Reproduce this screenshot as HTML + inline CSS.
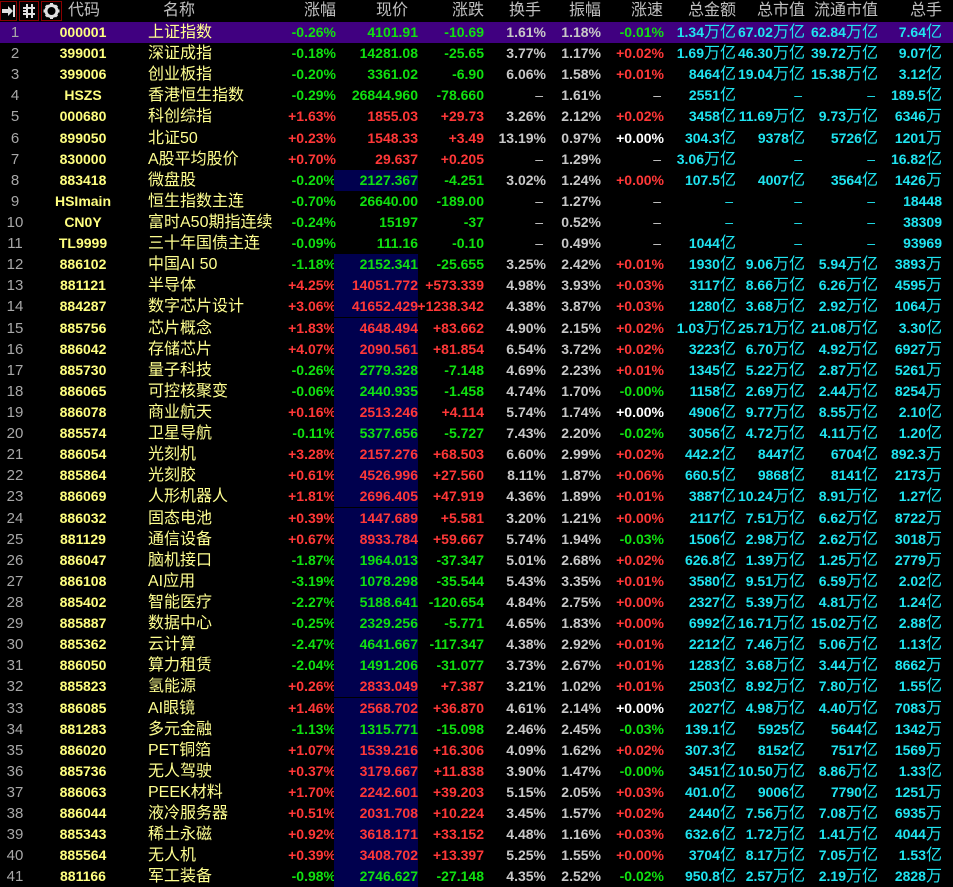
<!DOCTYPE html>
<html><head><meta charset="utf-8">
<style>
*{margin:0;padding:0;box-sizing:border-box}
body{width:953px;height:886px;background:#000;overflow:hidden;position:relative;font-family:"Liberation Sans","Noto Sans CJK SC",sans-serif}
.hd{position:absolute;top:0;left:0;width:953px;height:22px;color:#c0c0c0;font-size:16px;font-family:"Liberation Sans","Noto Sans CJK SC",sans-serif}
.hd span{position:absolute;top:0;line-height:22px;white-space:nowrap}
.ic{position:absolute;top:1px;height:20px;border:1px solid #8a0000}
#rows{position:absolute;top:22px;left:0;width:953px}
.r{position:relative;height:21.12px;width:953px}
.r.sel{background:#400080}
.r span{position:absolute;top:0;line-height:21px;white-space:nowrap;font-weight:bold;font-size:14px}
.r span:nth-child(1){left:0;width:30px;text-align:center;color:#a8a8a8;font-weight:normal;font-size:15px}
.r span:nth-child(2){left:40px;width:86px;text-align:center;color:#ffff80}
.r span:nth-child(3){left:148px;color:#ffff90;font-weight:normal;font-size:16px}
.r span:nth-child(4){right:617px}
.r span:nth-child(5){right:535px;width:84px;text-align:right;height:21px}
.r.b span:nth-child(5){background:#00004e}
.r span:nth-child(6){right:469px}
.r span:nth-child(7){right:407px;color:#c8c8c8}
.r span:nth-child(8){right:352px;color:#c8c8c8}
.r span:nth-child(9){right:289px}
.r span:nth-child(10){right:217px;color:#20e4f0}
.r span:nth-child(11){right:148px;color:#20e4f0}
.r span:nth-child(12){right:75px;color:#20e4f0}
.r span:nth-child(13){right:11px;color:#20e4f0}
i{font-style:normal;font-weight:normal;font-size:16px}
.g{color:#10e010!important}.d{color:#ff3838!important}.w{color:#fff!important}.s{color:#c8c8c8!important;font-weight:normal!important;padding-right:3px}
.sc{color:#20e4f0!important;font-weight:normal!important;padding-right:3px}
</style></head><body>
<div class="hd">
<div class="ic" style="left:0;width:17px"><svg width="15" height="18" viewBox="0 0 15 18"><path d="M1 7h6V4l5 5-5 5v-3H1z" fill="#e0e0e0"/><rect x="12" y="3" width="2" height="12" fill="#e0e0e0"/></svg></div>
<div class="ic" style="left:19px;width:20px"><svg width="18" height="18" viewBox="0 0 18 18"><g fill="#e0e0e0"><rect x="6" y="2" width="2" height="14"/><rect x="11" y="2" width="2" height="14"/><rect x="3" y="5" width="12" height="2"/><rect x="3" y="11" width="12" height="2"/><rect x="3" y="8" width="4" height="2"/></g></svg></div>
<div class="ic" style="left:41px;width:21px"><svg width="19" height="18" viewBox="0 0 19 18"><circle cx="9.5" cy="9" r="5.5" fill="none" stroke="#e0e0e0" stroke-width="3"/><g stroke="#e0e0e0" stroke-width="3"><path d="M9.5 1v3M9.5 14v3M1.5 9h3M14.5 9h3M4 3.5l2 2M13 12.5l2 2M15 3.5l-2 2M6 12.5l-2 2"/></g></svg></div>
<span style="left:68px">代码</span><span style="left:163px">名称</span>
<span style="right:617px">涨幅</span><span style="right:545px">现价</span><span style="right:469px">涨跌</span>
<span style="right:412px">换手</span><span style="right:352px">振幅</span><span style="right:290px">涨速</span>
<span style="right:217px">总金额</span><span style="right:148px">总市值</span><span style="right:75px">流通市值</span><span style="right:11px">总手</span>
</div>
<div id="rows">
<div class="r sel"><span>1</span><span>000001</span><span>上证指数</span><span class="g">-0.26%</span><span class="g">4101.91</span><span class="g">-10.69</span><span>1.61%</span><span>1.18%</span><span class="g">-0.01%</span><span>1.34<i>万亿</i></span><span>67.02<i>万亿</i></span><span>62.84<i>万亿</i></span><span>7.64<i>亿</i></span></div>
<div class="r"><span>2</span><span>399001</span><span>深证成指</span><span class="g">-0.18%</span><span class="g">14281.08</span><span class="g">-25.65</span><span>3.77%</span><span>1.17%</span><span class="d">+0.02%</span><span>1.69<i>万亿</i></span><span>46.30<i>万亿</i></span><span>39.72<i>万亿</i></span><span>9.07<i>亿</i></span></div>
<div class="r"><span>3</span><span>399006</span><span>创业板指</span><span class="g">-0.20%</span><span class="g">3361.02</span><span class="g">-6.90</span><span>6.06%</span><span>1.58%</span><span class="d">+0.01%</span><span>8464<i>亿</i></span><span>19.04<i>万亿</i></span><span>15.38<i>万亿</i></span><span>3.12<i>亿</i></span></div>
<div class="r"><span>4</span><span>HSZS</span><span>香港恒生指数</span><span class="g">-0.29%</span><span class="g">26844.960</span><span class="g">-78.660</span><span class="s">–</span><span>1.61%</span><span class="s">–</span><span>2551<i>亿</i></span><span class="sc">–</span><span class="sc">–</span><span>189.5<i>亿</i></span></div>
<div class="r"><span>5</span><span>000680</span><span>科创综指</span><span class="d">+1.63%</span><span class="d">1855.03</span><span class="d">+29.73</span><span>3.26%</span><span>2.12%</span><span class="d">+0.02%</span><span>3458<i>亿</i></span><span>11.69<i>万亿</i></span><span>9.73<i>万亿</i></span><span>6346<i>万</i></span></div>
<div class="r"><span>6</span><span>899050</span><span>北证50</span><span class="d">+0.23%</span><span class="d">1548.33</span><span class="d">+3.49</span><span>13.19%</span><span>0.97%</span><span class="w">+0.00%</span><span>304.3<i>亿</i></span><span>9378<i>亿</i></span><span>5726<i>亿</i></span><span>1201<i>万</i></span></div>
<div class="r"><span>7</span><span>830000</span><span>A股平均股价</span><span class="d">+0.70%</span><span class="d">29.637</span><span class="d">+0.205</span><span class="s">–</span><span>1.29%</span><span class="s">–</span><span>3.06<i>万亿</i></span><span class="sc">–</span><span class="sc">–</span><span>16.82<i>亿</i></span></div>
<div class="r b"><span>8</span><span>883418</span><span>微盘股</span><span class="g">-0.20%</span><span class="g">2127.367</span><span class="g">-4.251</span><span>3.02%</span><span>1.24%</span><span class="d">+0.00%</span><span>107.5<i>亿</i></span><span>4007<i>亿</i></span><span>3564<i>亿</i></span><span>1426<i>万</i></span></div>
<div class="r"><span>9</span><span>HSImain</span><span>恒生指数主连</span><span class="g">-0.70%</span><span class="g">26640.00</span><span class="g">-189.00</span><span class="s">–</span><span>1.27%</span><span class="s">–</span><span class="sc">–</span><span class="sc">–</span><span class="sc">–</span><span>18448</span></div>
<div class="r"><span>10</span><span>CN0Y</span><span>富时A50期指连续</span><span class="g">-0.24%</span><span class="g">15197</span><span class="g">-37</span><span class="s">–</span><span>0.52%</span><span class="s">–</span><span class="sc">–</span><span class="sc">–</span><span class="sc">–</span><span>38309</span></div>
<div class="r"><span>11</span><span>TL9999</span><span>三十年国债主连</span><span class="g">-0.09%</span><span class="g">111.16</span><span class="g">-0.10</span><span class="s">–</span><span>0.49%</span><span class="s">–</span><span>1044<i>亿</i></span><span class="sc">–</span><span class="sc">–</span><span>93969</span></div>
<div class="r b"><span>12</span><span>886102</span><span>中国AI 50</span><span class="g">-1.18%</span><span class="g">2152.341</span><span class="g">-25.655</span><span>3.25%</span><span>2.42%</span><span class="d">+0.01%</span><span>1930<i>亿</i></span><span>9.06<i>万亿</i></span><span>5.94<i>万亿</i></span><span>3893<i>万</i></span></div>
<div class="r b"><span>13</span><span>881121</span><span>半导体</span><span class="d">+4.25%</span><span class="d">14051.772</span><span class="d">+573.339</span><span>4.98%</span><span>3.93%</span><span class="d">+0.03%</span><span>3117<i>亿</i></span><span>8.66<i>万亿</i></span><span>6.26<i>万亿</i></span><span>4595<i>万</i></span></div>
<div class="r b"><span>14</span><span>884287</span><span>数字芯片设计</span><span class="d">+3.06%</span><span class="d">41652.429</span><span class="d">+1238.342</span><span>4.38%</span><span>3.87%</span><span class="d">+0.03%</span><span>1280<i>亿</i></span><span>3.68<i>万亿</i></span><span>2.92<i>万亿</i></span><span>1064<i>万</i></span></div>
<div class="r b"><span>15</span><span>885756</span><span>芯片概念</span><span class="d">+1.83%</span><span class="d">4648.494</span><span class="d">+83.662</span><span>4.90%</span><span>2.15%</span><span class="d">+0.02%</span><span>1.03<i>万亿</i></span><span>25.71<i>万亿</i></span><span>21.08<i>万亿</i></span><span>3.30<i>亿</i></span></div>
<div class="r b"><span>16</span><span>886042</span><span>存储芯片</span><span class="d">+4.07%</span><span class="d">2090.561</span><span class="d">+81.854</span><span>6.54%</span><span>3.72%</span><span class="d">+0.02%</span><span>3223<i>亿</i></span><span>6.70<i>万亿</i></span><span>4.92<i>万亿</i></span><span>6927<i>万</i></span></div>
<div class="r b"><span>17</span><span>885730</span><span>量子科技</span><span class="g">-0.26%</span><span class="g">2779.328</span><span class="g">-7.148</span><span>4.69%</span><span>2.23%</span><span class="d">+0.01%</span><span>1345<i>亿</i></span><span>5.22<i>万亿</i></span><span>2.87<i>万亿</i></span><span>5261<i>万</i></span></div>
<div class="r b"><span>18</span><span>886065</span><span>可控核聚变</span><span class="g">-0.06%</span><span class="g">2440.935</span><span class="g">-1.458</span><span>4.74%</span><span>1.70%</span><span class="g">-0.00%</span><span>1158<i>亿</i></span><span>2.69<i>万亿</i></span><span>2.44<i>万亿</i></span><span>8254<i>万</i></span></div>
<div class="r b"><span>19</span><span>886078</span><span>商业航天</span><span class="d">+0.16%</span><span class="d">2513.246</span><span class="d">+4.114</span><span>5.74%</span><span>1.74%</span><span class="w">+0.00%</span><span>4906<i>亿</i></span><span>9.77<i>万亿</i></span><span>8.55<i>万亿</i></span><span>2.10<i>亿</i></span></div>
<div class="r b"><span>20</span><span>885574</span><span>卫星导航</span><span class="g">-0.11%</span><span class="g">5377.656</span><span class="g">-5.727</span><span>7.43%</span><span>2.20%</span><span class="g">-0.02%</span><span>3056<i>亿</i></span><span>4.72<i>万亿</i></span><span>4.11<i>万亿</i></span><span>1.20<i>亿</i></span></div>
<div class="r b"><span>21</span><span>886054</span><span>光刻机</span><span class="d">+3.28%</span><span class="d">2157.276</span><span class="d">+68.503</span><span>6.60%</span><span>2.99%</span><span class="d">+0.02%</span><span>442.2<i>亿</i></span><span>8447<i>亿</i></span><span>6704<i>亿</i></span><span>892.3<i>万</i></span></div>
<div class="r b"><span>22</span><span>885864</span><span>光刻胶</span><span class="d">+0.61%</span><span class="d">4526.996</span><span class="d">+27.560</span><span>8.11%</span><span>1.87%</span><span class="d">+0.06%</span><span>660.5<i>亿</i></span><span>9868<i>亿</i></span><span>8141<i>亿</i></span><span>2173<i>万</i></span></div>
<div class="r b"><span>23</span><span>886069</span><span>人形机器人</span><span class="d">+1.81%</span><span class="d">2696.405</span><span class="d">+47.919</span><span>4.36%</span><span>1.89%</span><span class="d">+0.01%</span><span>3887<i>亿</i></span><span>10.24<i>万亿</i></span><span>8.91<i>万亿</i></span><span>1.27<i>亿</i></span></div>
<div class="r b"><span>24</span><span>886032</span><span>固态电池</span><span class="d">+0.39%</span><span class="d">1447.689</span><span class="d">+5.581</span><span>3.20%</span><span>1.21%</span><span class="d">+0.00%</span><span>2117<i>亿</i></span><span>7.51<i>万亿</i></span><span>6.62<i>万亿</i></span><span>8722<i>万</i></span></div>
<div class="r b"><span>25</span><span>881129</span><span>通信设备</span><span class="d">+0.67%</span><span class="d">8933.784</span><span class="d">+59.667</span><span>5.74%</span><span>1.94%</span><span class="g">-0.03%</span><span>1506<i>亿</i></span><span>2.98<i>万亿</i></span><span>2.62<i>万亿</i></span><span>3018<i>万</i></span></div>
<div class="r b"><span>26</span><span>886047</span><span>脑机接口</span><span class="g">-1.87%</span><span class="g">1964.013</span><span class="g">-37.347</span><span>5.01%</span><span>2.68%</span><span class="d">+0.02%</span><span>626.8<i>亿</i></span><span>1.39<i>万亿</i></span><span>1.25<i>万亿</i></span><span>2779<i>万</i></span></div>
<div class="r b"><span>27</span><span>886108</span><span>AI应用</span><span class="g">-3.19%</span><span class="g">1078.298</span><span class="g">-35.544</span><span>5.43%</span><span>3.35%</span><span class="d">+0.01%</span><span>3580<i>亿</i></span><span>9.51<i>万亿</i></span><span>6.59<i>万亿</i></span><span>2.02<i>亿</i></span></div>
<div class="r b"><span>28</span><span>885402</span><span>智能医疗</span><span class="g">-2.27%</span><span class="g">5188.641</span><span class="g">-120.654</span><span>4.84%</span><span>2.75%</span><span class="d">+0.00%</span><span>2327<i>亿</i></span><span>5.39<i>万亿</i></span><span>4.81<i>万亿</i></span><span>1.24<i>亿</i></span></div>
<div class="r b"><span>29</span><span>885887</span><span>数据中心</span><span class="g">-0.25%</span><span class="g">2329.256</span><span class="g">-5.771</span><span>4.65%</span><span>1.83%</span><span class="d">+0.00%</span><span>6992<i>亿</i></span><span>16.71<i>万亿</i></span><span>15.02<i>万亿</i></span><span>2.88<i>亿</i></span></div>
<div class="r b"><span>30</span><span>885362</span><span>云计算</span><span class="g">-2.47%</span><span class="g">4641.667</span><span class="g">-117.347</span><span>4.38%</span><span>2.92%</span><span class="d">+0.01%</span><span>2212<i>亿</i></span><span>7.46<i>万亿</i></span><span>5.06<i>万亿</i></span><span>1.13<i>亿</i></span></div>
<div class="r b"><span>31</span><span>886050</span><span>算力租赁</span><span class="g">-2.04%</span><span class="g">1491.206</span><span class="g">-31.077</span><span>3.73%</span><span>2.67%</span><span class="d">+0.01%</span><span>1283<i>亿</i></span><span>3.68<i>万亿</i></span><span>3.44<i>万亿</i></span><span>8662<i>万</i></span></div>
<div class="r b"><span>32</span><span>885823</span><span>氢能源</span><span class="d">+0.26%</span><span class="d">2833.049</span><span class="d">+7.387</span><span>3.21%</span><span>1.02%</span><span class="d">+0.01%</span><span>2503<i>亿</i></span><span>8.92<i>万亿</i></span><span>7.80<i>万亿</i></span><span>1.55<i>亿</i></span></div>
<div class="r b"><span>33</span><span>886085</span><span>AI眼镜</span><span class="d">+1.46%</span><span class="d">2568.702</span><span class="d">+36.870</span><span>4.61%</span><span>2.14%</span><span class="w">+0.00%</span><span>2027<i>亿</i></span><span>4.98<i>万亿</i></span><span>4.40<i>万亿</i></span><span>7083<i>万</i></span></div>
<div class="r b"><span>34</span><span>881283</span><span>多元金融</span><span class="g">-1.13%</span><span class="g">1315.771</span><span class="g">-15.098</span><span>2.46%</span><span>2.45%</span><span class="g">-0.03%</span><span>139.1<i>亿</i></span><span>5925<i>亿</i></span><span>5644<i>亿</i></span><span>1342<i>万</i></span></div>
<div class="r b"><span>35</span><span>886020</span><span>PET铜箔</span><span class="d">+1.07%</span><span class="d">1539.216</span><span class="d">+16.306</span><span>4.09%</span><span>1.62%</span><span class="d">+0.02%</span><span>307.3<i>亿</i></span><span>8152<i>亿</i></span><span>7517<i>亿</i></span><span>1569<i>万</i></span></div>
<div class="r b"><span>36</span><span>885736</span><span>无人驾驶</span><span class="d">+0.37%</span><span class="d">3179.667</span><span class="d">+11.838</span><span>3.90%</span><span>1.47%</span><span class="g">-0.00%</span><span>3451<i>亿</i></span><span>10.50<i>万亿</i></span><span>8.86<i>万亿</i></span><span>1.33<i>亿</i></span></div>
<div class="r b"><span>37</span><span>886063</span><span>PEEK材料</span><span class="d">+1.70%</span><span class="d">2242.601</span><span class="d">+39.203</span><span>5.15%</span><span>2.05%</span><span class="d">+0.03%</span><span>401.0<i>亿</i></span><span>9006<i>亿</i></span><span>7790<i>亿</i></span><span>1251<i>万</i></span></div>
<div class="r b"><span>38</span><span>886044</span><span>液冷服务器</span><span class="d">+0.51%</span><span class="d">2031.708</span><span class="d">+10.224</span><span>3.45%</span><span>1.57%</span><span class="d">+0.02%</span><span>2440<i>亿</i></span><span>7.56<i>万亿</i></span><span>7.08<i>万亿</i></span><span>6935<i>万</i></span></div>
<div class="r b"><span>39</span><span>885343</span><span>稀土永磁</span><span class="d">+0.92%</span><span class="d">3618.171</span><span class="d">+33.152</span><span>4.48%</span><span>1.16%</span><span class="d">+0.03%</span><span>632.6<i>亿</i></span><span>1.72<i>万亿</i></span><span>1.41<i>万亿</i></span><span>4044<i>万</i></span></div>
<div class="r b"><span>40</span><span>885564</span><span>无人机</span><span class="d">+0.39%</span><span class="d">3408.702</span><span class="d">+13.397</span><span>5.25%</span><span>1.55%</span><span class="d">+0.00%</span><span>3704<i>亿</i></span><span>8.17<i>万亿</i></span><span>7.05<i>万亿</i></span><span>1.53<i>亿</i></span></div>
<div class="r b"><span>41</span><span>881166</span><span>军工装备</span><span class="g">-0.98%</span><span class="g">2746.627</span><span class="g">-27.148</span><span>4.35%</span><span>2.52%</span><span class="g">-0.02%</span><span>950.8<i>亿</i></span><span>2.57<i>万亿</i></span><span>2.19<i>万亿</i></span><span>2828<i>万</i></span></div>
</div>
</body></html>
